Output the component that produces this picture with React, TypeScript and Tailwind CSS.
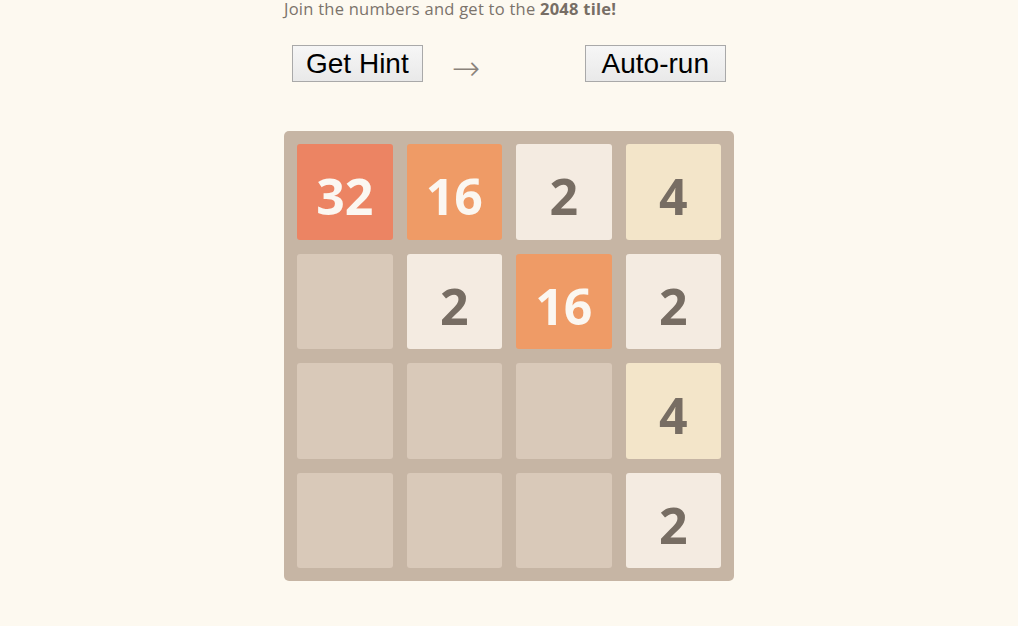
const tiles: (number | null)[][] = [
  [32, 16, 2, 4],
  [null, 2, 16, 2],
  [null, null, null, 4],
  [null, null, null, 2],
];

function tileClass(v: number | null) {
  switch (v) {
    case 2:
      return "bg-[#f4ebe1] text-[#776d63]";
    case 4:
      return "bg-[#f3e5c9] text-[#776d63]";
    case 16:
      return "bg-[#ef9b66] text-[#fbf7f1]";
    case 32:
      return "bg-[#ec8463] text-[#fbf7f1]";
    default:
      return "bg-[#d9c9b9]";
  }
}

function Tile({ value }: { value: number | null }) {
  return (
    <div
      className={`flex h-[95.5px] w-[95.5px] items-center justify-center rounded-[3px] pt-[9px] text-[50px] font-bold leading-none ${tileClass(value)}`}
    >
      {value ?? ""}
    </div>
  );
}

export default function App() {
  return (
    <div className="min-h-[626px] bg-[#fdf9f0] font-['Open_Sans',sans-serif]">
      <div className="mx-auto w-[450px]">
        <p className="h-[16px] text-[16.5px] leading-[18px] tracking-[0.25px] text-[#7b736b]">
          Join the numbers and get to the <strong className="font-bold text-[#776e65]">2048 tile!</strong>
        </p>

        <div className="mt-[29px] flex h-[37px] items-center px-2 font-['Liberation_Sans',Arial,sans-serif]">
          <button className="h-[37px] border border-[#a9a9a9] bg-gradient-to-b from-[#f6f6f6] to-[#e9e9e9] px-[13px] text-[28px] leading-none text-black">
            Get Hint
          </button>
          <span className="ml-[29px] translate-y-[4px] font-['DejaVu_Sans',sans-serif] text-[34px] font-light leading-none text-[#8a837b]">→</span>
          <button className="ml-auto h-[37px] border border-[#a9a9a9] bg-gradient-to-b from-[#f6f6f6] to-[#e9e9e9] px-[16px] text-[28px] leading-none text-black">
            Auto-run
          </button>
        </div>

        <div className="mt-[49px] grid grid-cols-4 gap-[14px] rounded-[5px] bg-[#c6b5a4] p-[13px]">
          {tiles.flat().map((v, i) => (
            <Tile key={i} value={v} />
          ))}
        </div>
      </div>
    </div>
  );
}
